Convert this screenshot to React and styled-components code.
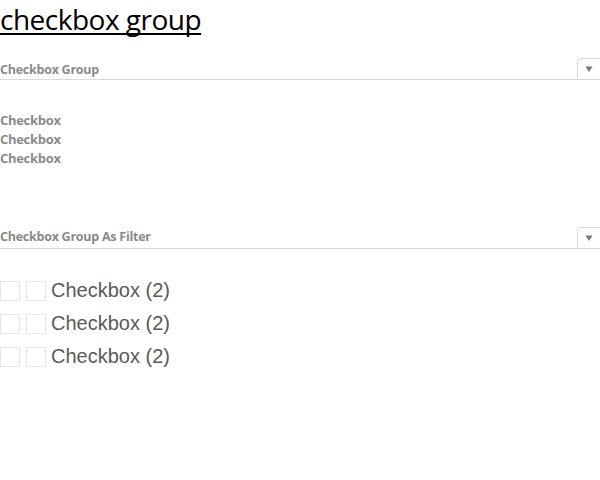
import React from "react";
import styled, { createGlobalStyle } from "styled-components";

const Global = createGlobalStyle`
  html, body { margin: 0; padding: 0; background: #fff; }
  body { font-family: "Open Sans", "Noto Sans", sans-serif; }
`;

const Page = styled.div`
  width: 600px;
  display: flex;
  flex-direction: column;
`;

const Title = styled.h1`
  margin: 0;
  font-family: "Open Sans", sans-serif;
  font-weight: 400;
  font-size: 28px;
  line-height: 40px;
  letter-spacing: -0.5px;
  color: #000;
  text-decoration: underline;
  text-decoration-thickness: 2px;
  text-underline-offset: 3px;
  text-decoration-skip-ink: none;
  height: 37px;
  margin-top: -1px;
`;

const SectionHeader = styled.div`
  display: flex;
  align-items: flex-end;
  justify-content: space-between;
  border-bottom: 1px solid #d9d9d9;
  margin-top: ${(p) => p.$top}px;
  height: 22px;
`;

const HeaderLabel = styled.span`
  font-family: "Open Sans", sans-serif;
  font-weight: 700;
  font-size: 12.5px;
  letter-spacing: -0.25px;
  color: #8a8a8a;
  line-height: 16px;
  padding-bottom: ${(p) => p.$pad}px;
`;

const ToggleButton = styled.button`
  width: 23px;
  height: 21px;
  padding: 0;
  border: 1px solid #d9d9d9;
  border-bottom: none;
  border-right: none;
  border-radius: 5px 0 0 0;
  background: #fff;
  display: flex;
  align-items: center;
  justify-content: center;
`;

const List = styled.div`
  display: flex;
  flex-direction: column;
  margin-top: ${(p) => p.$top}px;
`;

const PlainItem = styled.div`
  font-family: "Open Sans", sans-serif;
  font-weight: 700;
  font-size: 13px;
  letter-spacing: -0.3px;
  line-height: 19px;
  color: #8a8a8a;
`;

const FilterRow = styled.div`
  display: flex;
  align-items: center;
  height: 33px;
`;

const Box = styled.span`
  width: 18px;
  height: 18px;
  border: 1px solid #e6e6e6;
  margin-right: ${(p) => p.$gap}px;
  flex: none;
`;

const FilterLabel = styled.span`
  font-family: "Liberation Sans", Arial, sans-serif;
  font-size: 20px;
  color: #5a5a5a;
`;

const Triangle = () => (
  <svg width="8" height="8" viewBox="0 0 8 8">
    <path d="M0.5 1.5 L7.5 1.5 L4 7 Z" fill="#777" />
  </svg>
);

export default function App() {
  const items = ["Checkbox", "Checkbox", "Checkbox"];
  return (
    <Page>
      <Global />
      <Title>checkbox group</Title>
      <SectionHeader $top={21}>
        <HeaderLabel $pad={1}>Checkbox Group</HeaderLabel>
        <ToggleButton><Triangle /></ToggleButton>
      </SectionHeader>
      <List $top={31}>
        {items.map((t, i) => (
          <PlainItem key={i}>{t}</PlainItem>
        ))}
      </List>
      <SectionHeader $top={58}>
        <HeaderLabel $pad={3}>Checkbox Group As Filter</HeaderLabel>
        <ToggleButton><Triangle /></ToggleButton>
      </SectionHeader>
      <List $top={25}>
        {items.map((t, i) => (
          <FilterRow key={i}>
            <Box $gap={6} />
            <Box $gap={5} />
            <FilterLabel>{t} (2)</FilterLabel>
          </FilterRow>
        ))}
      </List>
    </Page>
  );
}
